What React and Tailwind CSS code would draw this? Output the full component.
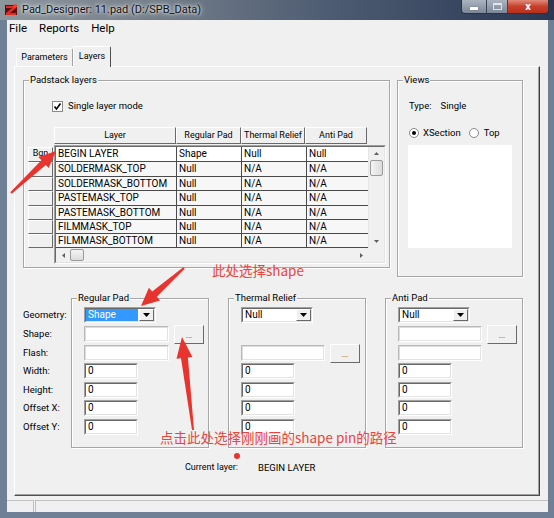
import React from 'react';

const raised = 'bg-[#f0f0f0] border border-t-white border-l-white border-r-[#696969] border-b-[#696969]';
const rowMt = ['mt-0', 'mt-[3px]', 'mt-[3px]', 'mt-[2px]', 'mt-[3px]', 'mt-[2px]', 'mt-[3px]'];

const rows = [
  ['BEGIN LAYER', 'Shape', 'Null', 'Null', 'h-[15px]'],
  ['SOLDERMASK_TOP', 'Null', 'N/A', 'N/A', 'h-[15px]'],
  ['SOLDERMASK_BOTTOM', 'Null', 'N/A', 'N/A', 'h-[14px]'],
  ['PASTEMASK_TOP', 'Null', 'N/A', 'N/A', 'h-[15px]'],
  ['PASTEMASK_BOTTOM', 'Null', 'N/A', 'N/A', 'h-[14px]'],
  ['FILMMASK_TOP', 'Null', 'N/A', 'N/A', 'h-[14px]'],
  ['FILMMASK_BOTTOM', 'Null', 'N/A', 'N/A', 'h-[14px]'],
];

function Tri({ dir = 'down', color = '#000', w = 7, h = 4 }) {
  const pts = {
    down: `0,0 ${w},0 ${w / 2},${h}`,
    up: `0,${h} ${w},${h} ${w / 2},0`,
    left: `${w},0 ${w},${h} 0,${h / 2}`,
    right: `0,0 0,${h} ${w},${h / 2}`,
  }[dir];
  return (
    <svg width={w} height={h} viewBox={`0 0 ${w} ${h}`}>
      <polygon points={pts} fill={color} />
    </svg>
  );
}

function Field({ w, light, children }) {
  return (
    <div className={`${w} h-[16px] border ${light ? 'border-t-[#b9b9b9] border-l-[#b9b9b9]' : 'border-t-[#a0a0a0] border-l-[#a0a0a0]'} border-r-white border-b-white`}>
      <div className={`h-full flex items-center bg-white border ${light ? 'border-t-[#dcdcdc] border-l-[#dcdcdc]' : 'border-t-[#696969] border-l-[#696969]'} border-r-[#e3e3e3] border-b-[#e3e3e3] text-[10px] leading-none`}>
        {children}
      </div>
    </div>
  );
}

function Combo({ value, selected }) {
  return (
    <Field w="w-[72px]">
      {selected ? (
        <span className="flex-1 h-full flex items-center pl-[2px] bg-[#3399ff] text-white mr-[1px]">{value}</span>
      ) : (
        <span className="flex-1 pl-[2px]">{value}</span>
      )}
      <div className={`${raised} w-[15px] h-full flex items-center justify-center`}>
        <Tri w={7} h={4} />
      </div>
    </Field>
  );
}

function Dots() {
  return (
    <div className={`${raised} w-[30px] h-[19px] flex items-end justify-center pb-[3px] text-[8px] leading-none text-[#333]`}>...</div>
  );
}

function Group({ label, className, children }) {
  return (
    <div className={`relative border border-[#a6a6a6] shadow-[inset_1px_1px_0_#fff,1px_1px_0_#fff] ${className}`}>
      <span className="absolute -top-[7px] left-[5px] bg-[#f0f0f0] px-[1px] leading-[12px] text-[9.5px]">{label}</span>
      {children}
    </div>
  );
}

function PadGroup({ label, className, items }) {
  return (
    <Group label={label} className={`w-[138px] h-[150px] pt-[8px] pl-[12px] ${className}`}>
      {items.map((it, i) => (
        <div key={i} className={`${rowMt[i]} h-[16px] flex items-center gap-[5px]`}>{it}</div>
      ))}
    </Group>
  );
}

function Num() {
  return <Field w="w-[54px]"><span className="pl-[2px]">0</span></Field>;
}

function arrowPts(tx, ty, hx, hy, headLen, headHalf, tailHalf, baseHalf) {
  const dx = hx - tx, dy = hy - ty, L = Math.hypot(dx, dy);
  const ux = dx / L, uy = dy / L, px = -uy, py = ux;
  const bx = hx - ux * headLen, by = hy - uy * headLen;
  const p = [
    [tx + px * tailHalf, ty + py * tailHalf],
    [bx + px * baseHalf, by + py * baseHalf],
    [bx + px * headHalf, by + py * headHalf],
    [hx, hy],
    [bx - px * headHalf, by - py * headHalf],
    [bx - px * baseHalf, by - py * baseHalf],
    [tx - px * tailHalf, ty - py * tailHalf],
  ];
  return p.map(([x, y]) => `${x.toFixed(1)},${y.toFixed(1)}`).join(' ');
}

function TitleBar() {
  return (
    <div className="h-[20px] flex items-start bg-[linear-gradient(90deg,#8d959d_0%,#77818c_25%,#4d5b72_60%,#2a3752_100%)]">
      <svg width="14" height="14" viewBox="0 0 14 14" className="ml-[4px] mt-[3px]">
        <rect x="1" y="2" width="12" height="10" fill="#5a1010" />
        <path d="M2 3 L12 3 L12 5 L6 10 L12 10 L12 12 L2 12 L2 10 L8 5 L2 5 Z" fill="#e02a22" />
        <circle cx="11" cy="3" r="2" fill="#f04030" />
      </svg>
      <span className="ml-[4px] mt-[3px] text-[11px] leading-[14px] text-[#111] [text-shadow:0_0_6px_#fff,0_0_3px_#fff]">Pad_Designer: 11.pad (D:/SPB_Data)</span>
      <div className="ml-auto mr-[5px] flex h-[14px] rounded-b-[4px] border border-t-0 border-[#2c3444] overflow-hidden">
        <div className="w-[25px] h-full bg-[linear-gradient(180deg,#aab4c0,#7c8898)] flex items-center justify-center border-r border-[#3a4454]">
          <div className="w-[8px] h-[3px] bg-white mt-[4px] shadow-[0_0_1px_#333]" />
        </div>
        <div className="w-[21px] h-full bg-[linear-gradient(180deg,#aab4c0,#7c8898)] flex items-center justify-center border-r border-[#3a4454]">
          <div className="w-[9px] h-[7px] border border-white border-t-2 opacity-70" />
        </div>
        <div className="w-[40px] h-full bg-[linear-gradient(180deg,#e08a7c,#c8402c_50%,#b8301c)] flex items-center justify-center text-white text-[11px] font-bold leading-none">
          x
        </div>
      </div>
    </div>
  );
}

function Grid() {
  return (
    <div className="flex mt-[15px] ml-[4px]">
      <div className="w-[25px] flex flex-col pt-[20px]">
        {rows.map((r, i) => (
          <div key={i} className={`${raised} ${r[4]} text-[9px] leading-none flex items-start justify-center pt-[1px]`}>
            {i === 0 ? 'Bgn' : ''}
          </div>
        ))}
      </div>
      <div className="ml-[1px] flex flex-col">
        <div className="flex h-[17px] text-[9px]">
          <div className={`${raised} w-[122px] flex items-center justify-center`}>Layer</div>
          <div className={`${raised} w-[65px] flex items-center justify-center`}>Regular Pad</div>
          <div className={`${raised} w-[64px] flex items-center justify-center`}>Thermal Relief</div>
          <div className={`${raised} w-[62px] flex items-center justify-center`}>Anti Pad</div>
        </div>
        <div className="mt-[1px] w-[332px] h-[119px] border border-t-[#a0a0a0] border-l-[#a0a0a0] border-r-white border-b-white">
          <div className="h-full flex border border-t-[#696969] border-l-[#696969] border-r-[#e3e3e3] border-b-[#e3e3e3]">
            <div className="w-[312px] flex flex-col">
              {rows.map((r, i) => (
                <div key={i} className={`${r[4]} flex border-b border-[#4a4a4a] text-[10px] leading-none ${i === 0 ? 'bg-white' : 'bg-[#f7f7f7]'}`}>
                  <div className="w-[121px] border-r border-[#4a4a4a] flex items-center pl-[2px]">{r[0]}</div>
                  <div className="w-[65px] border-r border-[#4a4a4a] flex items-center pl-[2px]">{r[1]}</div>
                  <div className="w-[65px] border-r border-[#4a4a4a] flex items-center pl-[2px]">{r[2]}</div>
                  <div className="w-[61px] flex items-center pl-[2px]">{r[3]}</div>
                </div>
              ))}
              <div className="h-[14px] bg-[#f0f0f0] flex items-center">
                <div className="w-[14px] h-full flex items-center justify-center"><Tri dir="left" color="#606060" w={3} h={5} /></div>
                <div className="w-[14px] h-[12px] rounded-[2px] border border-[#9a9a9a] bg-[linear-gradient(180deg,#f4f4f4,#dcdcdc)]" />
                <div className="ml-auto w-[14px] h-full flex items-center justify-center"><Tri dir="right" color="#606060" w={3} h={5} /></div>
              </div>
            </div>
            <div className="w-[16px] flex flex-col bg-[#f0f0f0]">
              <div className="h-[101px] flex flex-col items-center border-l border-[#e6e6e6]">
                <div className="h-[13px] flex items-center justify-center"><Tri dir="up" color="#606060" w={5} h={3} /></div>
                <div className="w-[13px] h-[16px] rounded-[2px] border border-[#9a9a9a] bg-[linear-gradient(90deg,#f4f4f4,#dcdcdc)]" />
                <div className="mt-auto h-[13px] flex items-center justify-center"><Tri dir="down" color="#606060" w={5} h={3} /></div>
              </div>
              <div className="flex-1" />
            </div>
          </div>
        </div>
      </div>
    </div>
  );
}

function Labels() {
  const names = ['Geometry:', 'Shape:', 'Flash:', 'Width:', 'Height:', 'Offset X:', 'Offset Y:'];
  return (
    <div className="w-[48px] pt-[9px] flex flex-col text-[9.5px]">
      {names.map((n, i) => (
        <div key={n} className={`${rowMt[i]} h-[16px] flex items-center`}>{n}</div>
      ))}
    </div>
  );
}

export default function App() {
  const red = '#e8332f';
  return (
    <div className="relative w-[554px] h-[518px] bg-[#6f7f96] flex flex-col overflow-hidden [font-family:Roboto,'Liberation_Sans',sans-serif] text-black">
      <TitleBar />
      <div className="ml-[7px] w-[541px] h-[492px] bg-[#f0f0f0] flex flex-col">
        <div className="h-[18px] flex items-center gap-[12px] pl-[2px] text-[11.5px]">
          <span>File</span>
          <span>Reports</span>
          <span>Help</span>
        </div>
        <div className="mt-[8px] h-[20px] ml-[9px] flex items-end text-[9px] relative z-10">
          <div className="h-[18px] w-[57px] flex items-center justify-center border-t border-l border-white border-r border-r-[#a0a0a0] rounded-t-[2px]">Parameters</div>
          <div className="h-[21px] -mb-px w-[38px] flex items-center justify-center bg-[#f0f0f0] border-t border-l border-white border-r border-r-[#505050] rounded-t-[2px]">Layers</div>
        </div>
        <div className="ml-[7px] w-[526px] h-[430px] border border-t-white border-l-white border-r-[#404040] border-b-[#505050] shadow-[inset_-1px_-1px_0_#a0a0a0] flex flex-col text-[9.5px]">
          <div className="flex items-start mt-[13px] ml-[8px]">
            <Group label="Padstack layers" className="w-[367px] h-[188px]">
              <div className="flex items-center ml-[28px] mt-[20px] h-[11px]">
                <div className="w-[11px] h-[11px] bg-white border border-[#8a8a8a] flex items-center justify-center">
                  <svg width="9" height="9" viewBox="0 0 9 9"><polyline points="1.5,4.5 3.5,7 7.5,1.5" fill="none" stroke="#000" strokeWidth="1.6" /></svg>
                </div>
                <span className="ml-[5px]">Single layer mode</span>
              </div>
              <Grid />
            </Group>
            <Group label="Views" className="ml-[7px] w-[126px] h-[197px]">
              <div className="mt-[19px] ml-[11px] h-[12px] flex items-center">
                <span>Type:</span>
                <span className="ml-[9px]">Single</span>
              </div>
              <div className="mt-[15px] ml-[11px] h-[12px] flex items-center">
                <div className="w-[10px] h-[10px] rounded-full border border-[#8a8a8a] bg-white flex items-center justify-center">
                  <div className="w-[4px] h-[4px] rounded-full bg-black" />
                </div>
                <span className="ml-[4px]">XSection</span>
                <div className="ml-[8px] w-[10px] h-[10px] rounded-full border border-[#8a8a8a] bg-white" />
                <span className="ml-[5px]">Top</span>
              </div>
              <div className="mt-[6px] ml-[10px] w-[104px] h-[103px] bg-white" />
            </Group>
          </div>
          <div className="flex items-start mt-[21px] ml-[8px]">
            <Labels />
            <PadGroup
              label="Regular Pad"
              items={[
                <Combo value="Shape" selected />,
                <><Field w="w-[85px]" light /><Dots /></>,
                <Field w="w-[85px]" light />,
                <Num />, <Num />, <Num />, <Num />,
              ]}
            />
            <PadGroup
              label="Thermal Relief"
              className="ml-[19px]"
              items={[
                <Combo value="Null" />,
                null,
                <><Field w="w-[84px]" light /><Dots /></>,
                <Num />, <Num />, <Num />, <Num />,
              ]}
            />
            <PadGroup
              label="Anti Pad"
              className="ml-[19px]"
              items={[
                <Combo value="Null" />,
                <><Field w="w-[84px]" light /><Dots /></>,
                <Field w="w-[84px]" light />,
                <Num />, <Num />, <Num />, <Num />,
              ]}
            />
          </div>
          <div className="mt-[14px] ml-[170px] h-[12px] flex items-center text-[9px]">
            <span className="w-[73px]">Current layer:</span>
            <span className="text-[9.5px]">BEGIN LAYER</span>
          </div>
        </div>
        <div className="mt-[4px] h-[12px] flex">
          <div className="w-[27px] border-t border-r border-[#c0c0c0]" />
          <div className="ml-[1px] flex-1 border-t border-l border-[#c0c0c0]" />
        </div>
      </div>

      <svg className="absolute inset-0 pointer-events-none" width="554" height="518" viewBox="0 0 554 518">
        <polygon points={arrowPts(11, 193, 56, 151, 17, 7.5, 1, 3.2)} fill={red} />
        <polygon points={arrowPts(184, 268, 141, 306, 18, 8.5, 1, 3.5)} fill={red} />
        <polygon points={arrowPts(193, 430, 182, 337, 21, 8, 1, 3.5)} fill={red} />
        <circle cx="237" cy="456" r="3" fill={red} />
      </svg>
      <span className="absolute left-[212px] top-[261px] text-[13.5px] leading-[18px] text-[#e8453f] [font-family:'Noto_Sans_CJK_SC',sans-serif]">此处选择shape</span>
      <span className="absolute left-[160px] top-[428px] text-[13.5px] leading-[18px] text-[#e8453f] [font-family:'Noto_Sans_CJK_SC',sans-serif]">点击此处选择刚刚画的shape pin的路径</span>
    </div>
  );
}
